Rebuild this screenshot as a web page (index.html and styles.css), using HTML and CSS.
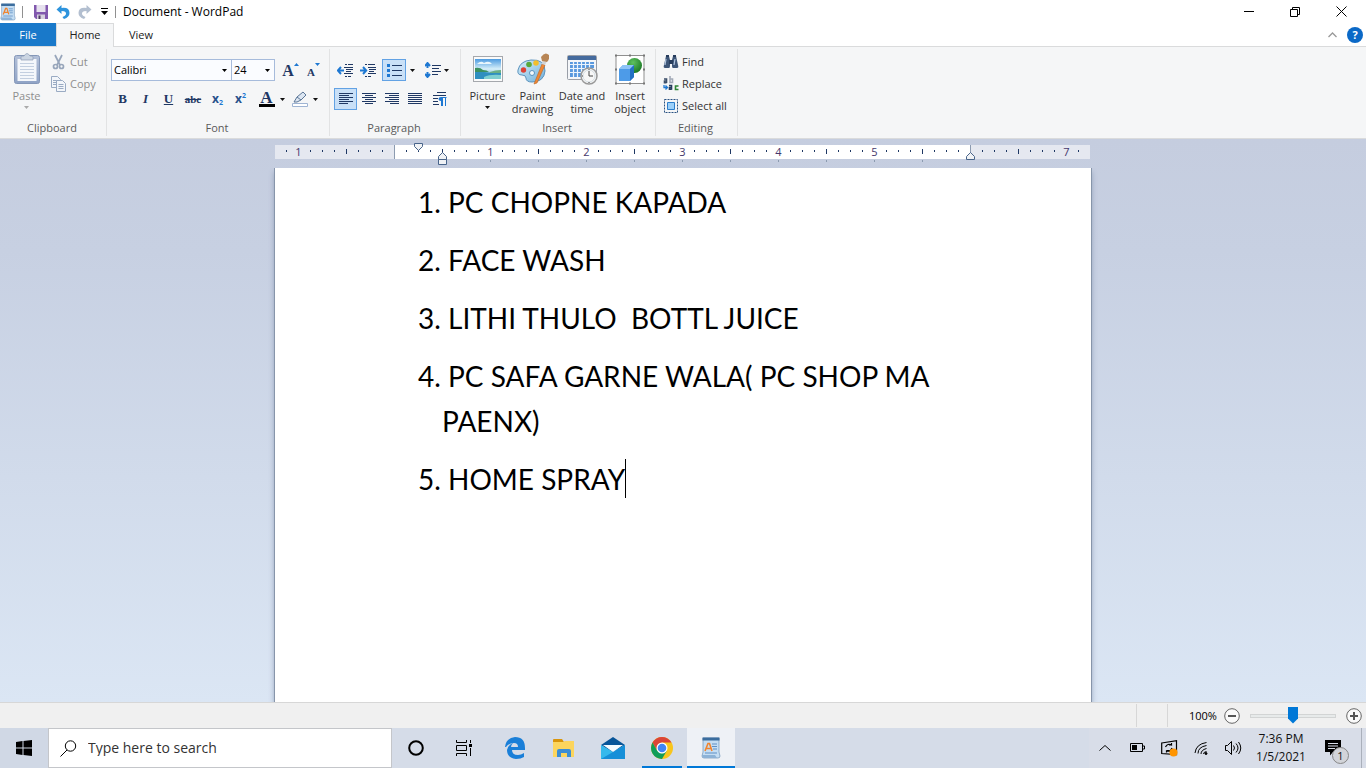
FILE: index.html
```html
<!DOCTYPE html>
<html lang="en">
<head>
<meta charset="utf-8">
<title>Document - WordPad</title>
<link rel="stylesheet" href="styles.css">
</head>
<body>
<svg class="defs" width="0" height="0" aria-hidden="true">
  <defs>
    <linearGradient id="sky" x1="0" y1="0" x2="0" y2="1"><stop offset="0" stop-color="#4d9be0"/><stop offset=".5" stop-color="#d6effa"/><stop offset="1" stop-color="#3d93b8"/></linearGradient>
    <linearGradient id="pal" x1="0" y1="0" x2="1" y2="1"><stop offset="0" stop-color="#d9f0fa"/><stop offset="1" stop-color="#6fb0dc"/></linearGradient>
    <linearGradient id="clip" x1="0" y1="0" x2="0" y2="1"><stop offset="0" stop-color="#b3c0d8"/><stop offset="1" stop-color="#8fa3c6"/></linearGradient>
    <radialGradient id="ball" cx=".4" cy=".3" r=".7"><stop offset="0" stop-color="#5fc25f"/><stop offset="1" stop-color="#1c7a26"/></radialGradient>
    <symbol id="wordpad" viewBox="0 0 20 22">
      <path d="M2 1h16v14l1 4q0 2-2 2H3q-2 0-2-2l1-4z" fill="#c4ddf3" stroke="#6f93b8" stroke-width=".7"/>
      <path d="M1.500 .5h17v3h-17z" fill="#3b6d9e"/>
      <path d="M1 18h13l2 3H3q-2 0-2-3z" fill="#8db2d6"/>
      <path d="M4 14 7 6.500h1.500l2.500 7.500M5.500 11.500h4" fill="none" stroke="#f0842e" stroke-width="1.600"/>
      <path d="M11 7h5M11 9.500h5M12 12h4M4 16h12" stroke="#5f8fc4" stroke-width="1"/>
    </symbol>
    <symbol id="caret" viewBox="0 0 5 3"><path d="M0 0h5L2.500 3z"/></symbol>
  </defs>
</svg>
<div class="app">
  <header class="titlebar">
    <svg class="app-icon" width="16" height="18"><use href="#wordpad"/></svg>
    <span class="bar-sep"></span>
    <div class="quick">
      <button aria-label="Save"><svg width="14" height="14" viewBox="0 0 14 14"><path d="M0 0h14v14H2l-2-2z" fill="#8158ad"/><path d="M2.500 0h9v7h-9z" fill="#e6e1ee"/><path d="M3 9.500h8V14H3z" fill="#d5d0dd"/><path d="M4.500 10.500h2V14h-2z" fill="#4b3b60"/></svg></button>
      <button aria-label="Undo"><svg width="14" height="14" viewBox="0 0 14 14"><path d="M.5 4.500 5.500 0v3q8-1 8 5 0 4-5.500 6-1-1-1.500-2 5-2 3-5-1-1-4-1v3z" fill="#2e94dd"/></svg></button>
      <button aria-label="Redo"><svg width="14" height="14" viewBox="0 0 14 14"><path d="M13.500 4.500 8.500 0v3Q.5 2 .5 8q0 4 5.500 6 1-1 1.500-2-5-2-3-5 1-1 4-1v3z" fill="#b3bfd0"/></svg></button>
      <button class="narrow" aria-label="Customize Quick Access Toolbar"><svg width="7" height="7" viewBox="0 0 7 7"><path d="M0 0h7v1H0zM0 3h7L3.500 7z"/></svg></button>
    </div>
    <span class="bar-sep"></span>
    <h1>Document - WordPad</h1>
    <div class="window-buttons">
      <button aria-label="Minimize"><svg width="10" height="10"><path d="M0 4h10v1H0z"/></svg></button>
      <button aria-label="Restore"><svg class="line" width="10" height="10"><path d="M.5 2.500h7v7h-7zM2.500 2V.5h7v7H8"/></svg></button>
      <button aria-label="Close"><svg class="line" width="11" height="11"><path d="M.5.500l10 10m0-10-10 10"/></svg></button>
    </div>
  </header>

  <nav class="tabs">
    <button class="tab file">File</button>
    <button class="tab active">Home</button>
    <button class="tab">View</button>
    <div class="tab-tools">
      <button aria-label="Minimize the Ribbon"><svg width="9" height="6" viewBox="0 0 9 6"><path d="M.5 5 4.500 1l4 4" fill="none" stroke="#999" stroke-width="1.300"/></svg></button>
      <button class="help" aria-label="Help">?</button>
    </div>
  </nav>

  <section class="ribbon">
    <div class="group clipboard">
      <div class="group-body">
        <button class="big disabled">
          <svg width="26" height="32" viewBox="0 0 26 32"><rect x=".5" y="2.500" width="25" height="28" rx="2" fill="url(#clip)" stroke="#8497b8"/><path d="M3.500 6h19v22h-19z" fill="#f4f7fb"/><path d="M6 10.500h14M6 13.500h14M6 16.500h14M6 19.500h14M6 22.500h14M6 25.500h14" stroke="#c3cfe0"/><path d="M7 7V4q0-1 2-1h1q3-5 6 0h1q2 0 2 1v3z" fill="#cbd5e2" stroke="#8c9cb4" stroke-width=".7"/></svg>
          <span>Paste</span>
          <svg class="caret" width="5" height="3"><use href="#caret"/></svg>
        </button>
        <div class="stack">
          <button class="row-btn disabled"><svg width="15" height="16" viewBox="0 0 15 16" fill="none" stroke="#98a6bb" stroke-width="1.700"><path d="M4 1l5 10M11 1 6 11"/><circle cx="4.500" cy="12.500" r="2"/><circle cx="10.500" cy="12.500" r="2"/></svg>Cut</button>
          <button class="row-btn disabled"><svg width="15" height="16" viewBox="0 0 15 16" fill="#f3f6fa" stroke="#9aabc3"><path d="M.5.500h6l3 3v8h-9z"/><path d="M2 4.500h4M2 6.500h4M2 8.500h4"/><path d="M5.500 4.500h6l3 3v8h-9z"/><path d="M7.500 8.500h5M7.500 10.500h5M7.500 12.500h5"/></svg>Copy</button>
        </div>
      </div>
      <div class="group-label">Clipboard</div>
    </div>

    <div class="group font">
      <div class="group-body rows">
        <div class="tool-row">
          <select class="family" aria-label="Font family"><option>Calibri</option></select><select class="size" aria-label="Font size"><option>24</option></select>
          <button class="tool grow" aria-label="Grow font"><span class="serif">A</span><svg width="5" height="3" viewBox="0 0 5 3"><path d="M0 3h5L2.500 0z" fill="#1e78d2"/></svg></button>
          <button class="tool shrink" aria-label="Shrink font"><span class="serif">A</span><svg width="5" height="3" viewBox="0 0 5 3"><path d="M0 0h5L2.500 3z" fill="#1e78d2"/></svg></button>
        </div>
        <div class="tool-row">
          <button class="tool serif bold" aria-label="Bold">B</button>
          <button class="tool serif italic" aria-label="Italic">I</button>
          <button class="tool serif under" aria-label="Underline">U</button>
          <button class="tool serif strike" aria-label="Strikethrough">abc</button>
          <button class="tool script" aria-label="Subscript">x<sub>2</sub></button>
          <button class="tool script" aria-label="Superscript">x<sup>2</sup></button>
          <button class="tool split colour" aria-label="Text color"><span class="serif letter">A</span><svg class="caret" width="5" height="3"><use href="#caret"/></svg></button>
          <button class="tool split" aria-label="Text highlight color"><svg width="16" height="16" viewBox="0 0 16 16"><path d="M.5 12.500h15v3H.5z" fill="#fff" stroke="#9fb4d3"/><path d="M2 11 5 6l6-5 3 3-5 5-4 2z" fill="#dce6f2" stroke="#5c7798"/><path d="m5 6 4 3" stroke="#5c7798"/></svg><svg class="caret" width="5" height="3"><use href="#caret"/></svg></button>
        </div>
      </div>
      <div class="group-label">Font</div>
    </div>

    <div class="group paragraph">
      <div class="group-body rows">
        <div class="tool-row">
          <button class="tool" aria-label="Decrease indent"><svg class="glyph" width="17" height="15"><path d="M8 1.500h2m1 0h5M8 13.500h2m1 0h3M7 4.500h9M9 6.500h7M9 8.500h5M7 10.500h9"/><path class="blue" d="M1 7.500h6M4 4 .8 7.500 4 11"/></svg></button>
          <button class="tool" aria-label="Increase indent"><svg class="glyph" width="17" height="15"><path d="M5 1.500h2m1 0h7M5 13.500h2m1 0h3M8 4.500h8M9 6.500h7M9 8.500h5M8 10.500h8"/><path class="blue" d="M0 7.500h6M3 4l3.200 3.500L3 11"/></svg></button>
          <button class="tool selected list" aria-label="Start a list"><svg class="glyph" width="15" height="14"><path d="M5 2.500h10M5 7.500h10M5 12.500h10"/><path class="dot" d="M0 1h3v3H0zM0 6h3v3H0zM0 11h3v3H0z"/></svg></button>
          <button class="tool slim" aria-label="List styles"><svg class="caret" width="5" height="3"><use href="#caret"/></svg></button>
          <button class="tool split spacing" aria-label="Line spacing"><svg class="glyph" width="16" height="16"><path d="M7 3.500h9M7 6.500h7M7 9.500h9M7 12.500h6"/><path class="blue" d="M2.500 1v5M2.500 10v5M0 4l2.500-3L5 4M0 12l2.500 3L5 12"/></svg><svg class="caret" width="5" height="3"><use href="#caret"/></svg></button>
        </div>
        <div class="tool-row">
          <button class="tool selected" aria-label="Align left"><svg class="glyph" width="14" height="12"><path d="M0 .5h14M0 2.500h10M0 4.500h14M0 6.500h10M0 8.500h14M0 10.500h9"/></svg></button>
          <button class="tool" aria-label="Center"><svg class="glyph" width="14" height="12"><path d="M0 .5h14M3 2.500h8M0 4.500h14M3 6.500h8M0 8.500h14M3 10.500h8"/></svg></button>
          <button class="tool" aria-label="Align right"><svg class="glyph" width="14" height="12"><path d="M0 .5h14M4 2.500h10M0 4.500h14M4 6.500h10M0 8.500h14M5 10.500h9"/></svg></button>
          <button class="tool" aria-label="Justify"><svg class="glyph" width="14" height="12"><path d="M0 .5h14M0 2.500h14M0 4.500h14M0 6.500h14M0 8.500h14M0 10.500h14"/></svg></button>
          <button class="tool last" aria-label="Paragraph"><svg class="glyph" width="14" height="14"><path d="M4 .5h9M0 3.500h13M0 6.500h5M0 9.500h5M0 12.500h6"/><path class="pilcrow" d="M8 14V9Q5.500 9 5.500 7T8 5h5.500v1H13v8h-1V6h-2v8z"/></svg></button>
        </div>
      </div>
      <div class="group-label">Paragraph</div>
    </div>

    <div class="group insert">
      <div class="group-body">
        <button class="big picture">
          <svg width="32" height="32" viewBox="0 0 32 32"><rect x="1.500" y="3.500" width="29" height="25" fill="#fafafa" stroke="#a5a8ad"/><path d="M3 6h26v20H3z" fill="url(#sky)"/><path d="M5 11q4-4 7-1 5-3 8 1z" fill="#e9f6fc"/><path d="M3 16q5 0 9 3 8 1 17 1v6H3z" fill="#2f8fc0"/><path d="M3 15q5-1 8 2 4 0 6 2H3z" fill="#3d9160"/><path d="M18 19q5-2 11-2v3H18z" fill="#6aaf86"/><path d="M12 24q6-3 17-2v4H12z" fill="#7fcfd0"/></svg>
          <span>Picture</span>
          <svg class="caret" width="5" height="3"><use href="#caret"/></svg>
        </button>
        <button class="big paint">
          <svg width="32" height="32" viewBox="0 0 32 32"><path d="M14 7q14-1 14 11-1 11-13 11-6 0-6-4 0-3-4-3-5 0-4-5Q3 8 14 7z" fill="url(#pal)" stroke="#5a92bd"/><circle cx="15" cy="20" r="2.500" fill="#f4f9fc" stroke="#5a92bd"/><circle cx="6.500" cy="17" r="2.700" fill="#dd4337"/><circle cx="12" cy="11.500" r="2.800" fill="#58a83c"/><circle cx="19" cy="10" r="2.800" fill="#f3be2c"/><path d="m17 31 8-20 3 1-8 18z" fill="#ef8735" stroke="#b96523" stroke-width=".6"/><path d="m24.500 11 1-3 4 1-1.500 3z" fill="#d0d3d6"/><path d="M24 4q4-6 8-2 1 4-2 7l-5-1z" fill="#b78555"/></svg>
          <span>Paint<br>drawing</span>
        </button>
        <button class="big date">
          <svg width="32" height="32" viewBox="0 0 32 32"><rect x="1.500" y="2.500" width="29" height="24" rx="1" fill="#f4f6f9" stroke="#999ea7"/><path d="M2 3h28v4H2z" fill="#456b9e"/><path d="M4 9h24v15H4z" fill="#5898de"/><path d="M4 11.500h24M4 15.500h24M4 19.500h24M7.500 9v15M11.500 9v15M15.500 9v15M19.500 9v15M23.500 9v15" stroke="#eaf3fc" stroke-width="1.200"/><circle cx="23" cy="23" r="8" fill="#f7f7f7" stroke="#999" stroke-width="1.500"/><circle cx="23" cy="23" r="6" fill="none" stroke="#d4dde3"/><path d="M23 18v5h4M23 16v1M23 29v1M17 23h-1" fill="none" stroke="#444"/></svg>
          <span>Date and<br>time</span>
        </button>
        <button class="big object">
          <svg width="32" height="32" viewBox="0 0 32 32"><path d="M2 2.500h28v28H2z" fill="#fff" stroke="#8f8f8f"/><circle cx="20.500" cy="12.500" r="7.500" fill="url(#ball)"/><path d="m5 16 4-4h11v12l-4 4H5z" fill="#4d9be8"/><path d="m5 16 4-4h11l-4 4z" fill="#8dc3f7"/><path d="m16 16 4-4v12l-4 4z" fill="#2471c4"/><path d="M1 1.500h2v2H1zM15 1.500h2v2h-2zM29 1.500h2v2h-2zM1 15.500h2v2H1zM29 15.500h2v2h-2zM1 29.500h2v2H1zM15 29.500h2v2h-2zM29 29.500h2v2h-2z" fill="#777"/></svg>
          <span>Insert<br>object</span>
        </button>
      </div>
      <div class="group-label">Insert</div>
    </div>

    <div class="group editing">
      <div class="group-body">
        <div class="stack">
          <button class="row-btn"><svg width="16" height="16" viewBox="0 0 16 16"><path d="M3 2h3l1 4v6q0 2-1 2H2q-2 0-1-3zM13 2h-3L9 6v6q0 2 1 2h4q2 0 1-3z" fill="#3d5577"/><path d="M6 6h4v4H6zM3 1h3v2H3zM10 1h3v2h-3z" fill="#263c5c"/><path d="M3 5 2 11M12 5l-1 6" stroke="#b1c4de" stroke-width="1.200"/></svg>Find</button>
          <button class="row-btn"><svg width="16" height="16" viewBox="0 0 16 16" fill="none" stroke-width="1.600"><g stroke="#3b4e69"><path d="M1 3h2.500v4M3.500 5H1.500v1.700h2"/></g><path d="M7 0v6.500h2.500V3H7" stroke="#a3abb8"/><path d="M6 9.500h2.500v4.200M8.500 11.500h-2v1.800h2" stroke="#263c5c"/><path d="M15.500 10h-3v3.500h3" stroke="#2e8534"/><path d="M1 9v2.500h3M2.500 9.500l2 2-2 2" stroke="#1e78d2" stroke-width="1.300"/></svg>Replace</button>
          <button class="row-btn"><svg width="16" height="16" viewBox="0 0 16 16"><path d="M1.500 1.500h13v13h-13z" fill="none" stroke="#2a5382" stroke-dasharray="2 1"/><path d="M4.500 4.500h7v7h-7z" fill="#9bd0fa" stroke="#2c7ecb"/></svg>Select all</button>
        </div>
      </div>
      <div class="group-label">Editing</div>
    </div>
  </section>

  <main class="workspace">
    <div class="ruler"><svg id="ruler" width="816" height="23" role="img" aria-label="Ruler"></svg></div>
    <article class="page">
      <p>1. PC CHOPNE KAPADA</p>
      <p>2. FACE WASH</p>
      <p>3. LITHI THULO  BOTTL JUICE</p>
      <p>4. PC SAFA GARNE WALA( PC SHOP MA PAENX)</p>
      <p>5. HOME SPRAY<span class="cursor"></span></p>
    </article>
  </main>

  <footer class="status">
    <span class="cell"></span>
    <div class="zoom">
      <label for="zoom">100%</label>
      <button aria-label="Zoom out"><svg width="16" height="16" viewBox="0 0 16 16"><circle cx="8" cy="8" r="7.300"/><path d="M4 7h8v2H4z"/></svg></button>
      <input id="zoom" type="range" min="0" max="200" value="100">
      <button aria-label="Zoom in"><svg width="16" height="16" viewBox="0 0 16 16"><circle cx="8" cy="8" r="7.300"/><path d="M4 7h3V4h2v3h3v2H9v3H7V9H4z"/></svg></button>
    </div>
  </footer>
</div>

<div class="taskbar">
  <button class="start" aria-label="Start"><svg width="16" height="16" viewBox="0 0 16 16"><path d="m0 2 6.500-1v6.500H0zM7.500.900 16 0v7.500H7.500zM0 8.500h6.500V15L0 14zM7.500 8.500H16V16l-8.500-1z"/></svg></button>
  <div class="search">
    <svg class="line" width="17" height="17" viewBox="0 0 17 17"><circle cx="10.500" cy="6" r="5.200"/><path d="M7 10 .5 16.500"/></svg>
    <input type="text" placeholder="Type here to search" aria-label="Type here to search">
  </div>
  <button class="task" aria-label="Cortana"><svg width="18" height="18"><circle cx="9" cy="9" r="6.800" fill="none" stroke="#000" stroke-width="2"/></svg></button>
  <button class="task" aria-label="Task View"><svg class="line" width="18" height="16" viewBox="0 0 18 16"><path d="M1.500 0v2.500h10V0M1.500 5.500h10v5h-10zM1.500 16v-2.500h10V16M15.500 0v3M15.500 8v8"/><path d="M14 4h3v3h-3z" fill="#000" stroke="none"/></svg></button>
  <div class="pinned">
    <button class="task" aria-label="Microsoft Edge"><svg width="20" height="22" viewBox="0 0 20 22"><path d="M0 10Q1 1 10 0q10 0 10 11v2H7q0 5 6 5 3 0 6-2v4q-3 2-8 2-9-1-9-9 1-5 6-7-2 2-2 4h7q0-4-4-4-5 0-8 4z" fill="#1a7fd8"/></svg></button>
    <button class="task" aria-label="File Explorer"><svg width="22" height="19" viewBox="0 0 22 19"><path d="M0 1q0-1 1-1h8l2 3H0z" fill="#d9950b"/><path d="M0 3h10l2-1h9v16H0z" fill="#fcd55d"/><path d="M4 18v-6q0-2 2-2h10q2 0 2 2v6h-4v-4H8v4z" fill="#3c8ed4"/></svg></button>
    <button class="task" aria-label="Mail"><svg width="24" height="22" viewBox="0 0 24 22"><path d="M0 8 12 0l12 8-12 8z" fill="#075599"/><path d="m0 8 12 7 12-7v14H0z" fill="#36b9ec"/><path d="M0 22 24 8v14z" fill="#168fd8"/><path d="M2 8h20l-10 7z" fill="#f4fbff"/></svg></button>
    <button class="task running" aria-label="Google Chrome"><svg width="22" height="22" viewBox="0 0 22 22"><circle cx="11" cy="11" r="11" fill="#f8c51c"/><path d="M1.500 5.500A11 11 0 0 1 20.500 5.500H11L6.200 13.800z" fill="#db4437"/><path d="M1.500 5.500 6.200 13.800 11 16.500 15.800 13.800 11 22A11 11 0 0 1 1.500 5.500z" fill="#109d58"/><circle cx="11" cy="11" r="5.500" fill="#fff"/><circle cx="11" cy="11" r="4.300" fill="#4285f4"/></svg></button>
    <button class="task current" aria-label="WordPad"><svg width="20" height="22"><use href="#wordpad"/></svg></button>
  </div>
  <div class="tray">
    <button aria-label="Show hidden icons"><svg class="line" width="12" height="8"><path d="m.5 6.500 5.500-5 5.500 5"/></svg></button>
    <button aria-label="Battery"><svg width="15" height="10"><path d="M.5.500h12v8H.5zM13 3h1.500v3H13" fill="none" stroke="#000"/><path d="M2 2h5v5H2z"/></svg></button>
    <button aria-label="Sync"><svg width="17" height="17" viewBox="0 0 17 17"><path d="M.7 3 15.500.700v13.800L.7 13.500z" fill="none" stroke="#000" stroke-width="1.200"/><path d="M4.500 7q2-4 6-2V3M10.500 5H8M11 8q-1 4-5.500 3v1.500M5.500 10.500H8" fill="none" stroke="#000" stroke-width="1.200"/><circle cx="12.500" cy="12.500" r="4" fill="#ff9400"/></svg></button>
    <button aria-label="Network"><svg class="line" width="14" height="14" viewBox="0 0 14 14"><path d="M1 12Q2 3 12.500 1.500M4 12.500Q4 6 12.500 4.500M7 13q0-4 5.500-5.500"/><path d="M9.500 13q0-2 3-2.500"/><circle cx="12" cy="12.500" r="1" fill="#000"/></svg></button>
    <button aria-label="Volume"><svg class="line" width="17" height="14" viewBox="0 0 17 14"><path d="M.5 4.500h2l4-4v13l-4-4h-2zM8.500 4.500q2 2.500 0 5M11 2.500q4 4.500 0 9M13.500 1q4.500 6 0 12"/></svg></button>
    <div class="clock"><time>7:36 PM</time><time>1/5/2021</time></div>
    <button class="notice" aria-label="Notifications"><svg width="16" height="16" viewBox="0 0 16 16"><path d="M0 0h16v12H8l-3 3.500V12H0z"/><path d="M3 3.500h10M3 6h10M3 8.500h7" stroke="#d8dde9"/></svg><span class="badge">1</span></button>
    <span class="desktop"></span>
  </div>
</div>
<script src="ruler.js"></script>
</body>
</html>
```
FILE: styles.css
```css
* { box-sizing: border-box; }
html, body { height: 100%; }
body {
  margin: 0;
  display: flex;
  flex-direction: column;
  overflow: hidden;
  background: #fff;
  color: #222;
  font: 11px/16px "Open Sans", "Noto Sans", sans-serif;
}
button, input, select { font: inherit; color: inherit; }
button {
  display: flex;
  align-items: center;
  justify-content: center;
  border: 0;
  padding: 0;
  background: none;
}
svg { display: block; flex: none; }
.defs { position: absolute; }
.line { fill: none; stroke: #000; }
.app { flex: 1; min-height: 0; display: flex; flex-direction: column; }

.titlebar { display: flex; align-items: center; height: 23px; }
.app-icon { margin-right: 6px; }
.bar-sep { width: 1px; height: 12px; background: #909090; }
.quick { display: flex; padding-left: 7px; }
.quick button { width: 22px; height: 20px; }
.quick .narrow { width: 16px; margin-right: 3px; }
.titlebar h1 { margin: 0 0 0 7px; font-size: 12px; font-weight: 400; color: #000; }
.window-buttons { display: flex; margin-left: auto; padding-right: 2px; }
.window-buttons button { width: 46px; height: 22px; }

.tabs { display: flex; height: 24px; border-bottom: 1px solid #dadbdc; }
.tab { padding: 0 15px; }
.tab.file { width: 56px; height: 23px; background: #1979ca; color: #fff; }
.tab.active {
  width: 58px;
  height: 24px;
  padding-bottom: 1px;
  background: #f5f6f7;
  border: 1px solid #dadbdc;
  border-bottom: 0;
}
.tab-tools { display: flex; align-items: center; gap: 10px; margin-left: auto; padding-right: 3px; }
.help { width: 16px; height: 16px; border-radius: 50%; background: #0b69c7; color: #fff; font-weight: 700; }

.ribbon { display: flex; height: 92px; background: #f5f6f7; border-bottom: 1px solid #dadbdc; color: #333; }
.group { display: flex; flex-direction: column; margin: 2px 0; border-right: 1px solid #e2e3e4; }
.group-body { flex: 1; display: flex; justify-content: center; }
.group-label { height: 16px; padding-right: 2px; text-align: center; color: #5a5a5a; }
.clipboard { width: 107px; }
.clipboard .group-body { justify-content: flex-start; padding-left: 8px; }
.font { width: 223px; }
.paragraph { width: 131px; }
.insert { width: 195px; }
.editing { width: 82px; }
.big { flex-direction: column; justify-content: flex-start; padding-top: 4px; line-height: 13px; }
.big span { margin: 4px 0; }
.insert .big { white-space: nowrap; }
.picture, .paint { width: 45px; }
.date { width: 54px; }
.object { width: 42px; }
.clipboard .big { width: 37px; }
.disabled { color: #8e8e8e; }
.disabled .caret { fill: #aaa; }
.stack { display: flex; flex-direction: column; padding: 2px 0 0 6px; }
.row-btn { height: 22px; justify-content: flex-start; gap: 4px; white-space: nowrap; }
.editing .group-body { justify-content: flex-start; }
.editing .stack { padding-left: 7px; }
.editing .row-btn { gap: 3px; }

.rows { flex-direction: column; justify-content: flex-start; gap: 7px; padding-top: 10px; }
.tool-row { display: flex; align-items: center; height: 22px; }
.font .tool-row { padding-left: 4px; }
.paragraph .tool-row { padding-left: 4px; }
select {
  appearance: none;
  height: 22px;
  margin: 0;
  border: 1px solid #a6bbdb;
  border-radius: 0;
  padding: 0 2px;
  color: #000;
  background: #fafcff url("data:image/svg+xml,%3Csvg xmlns='http://www.w3.org/2000/svg' width='5' height='3'%3E%3Cpath d='M0 0h5L2.5 3z'/%3E%3C/svg%3E") no-repeat right 4px center;
}
.family { width: 121px; }
.size { width: 44px; margin-left: -1px; }
.tool { width: 23px; height: 22px; color: #1f3864; }
.paragraph .tool.last { width: 28px; }
.selected { border: 1px solid #62a2e4; background: #c9e0f7; }
.serif { font-family: "Liberation Serif", serif; font-weight: 700; color: #1f3864; }
.grow { margin-left: 4px; align-items: flex-start; font-size: 16px; line-height: 24px; }
.shrink { align-items: flex-start; font-size: 11px; line-height: 26px; }
.grow svg, .shrink svg { margin-top: 4px; }
.bold, .italic, .under { width: 23px; font-size: 13px; }
.italic { font-style: italic; }
.under { text-decoration: underline; }
.strike { width: 26px; font-size: 11px; text-decoration: line-through; }
.script { font-size: 12px; font-weight: 700; color: #28508c; }
.script sub, .script sup { font-size: 7px; line-height: 10px; color: #1e78d2; }
.script sub { align-self: flex-end; padding-bottom: 2px; }
.script sup { align-self: flex-start; padding-top: 3px; }
.split { width: 33px; gap: 5px; }
.colour { margin-left: 3px; }
.letter { width: 16px; height: 16px; border-bottom: 3px solid #000; font-size: 17px; line-height: 13px; }
.slim { width: 12px; }
.list { width: 24px; margin-left: 2px; }
.spacing { margin-left: 2px; gap: 3px; }
.caret { fill: #111; }
.glyph { fill: none; stroke: #1f3864; }
.glyph .blue { stroke: #1e78d2; stroke-width: 2; }
.glyph .dot, .glyph .pilcrow { fill: #1e78d2; stroke: none; }

.workspace {
  flex: 1;
  min-height: 0;
  display: flex;
  flex-direction: column;
  align-items: center;
  padding-top: 6px;
  background: linear-gradient(#c5cddf, #c7d0e2 20%, #dbe6f4);
}
.ruler { width: 816px; height: 23px; }
#ruler { overflow: visible; font: 11px "Open Sans", sans-serif; }
.page {
  flex: 1;
  min-height: 0;
  width: 816px;
  max-width: 100%;
  padding: 12px 112px 0 167px;
  background: #fff;
  box-shadow: 0 0 0 1px #8795aa, 0 4px 6px #8494ae;
  clip-path: inset(0 -8px);
  color: #000;
  font: 28px/45px Lato, sans-serif;
}
.page p { margin: 0 0 13px; text-indent: -24px; white-space: pre-wrap; }
.cursor { display: inline-block; width: 1px; height: 39px; margin: -6px 0 3px; vertical-align: middle; background: #000; }

.status {
  display: flex;
  justify-content: flex-end;
  height: 26px;
  background: #f0f0f0;
  border-top: 1px solid #d7d7d7;
}
.cell { width: 32px; margin: 1px 0; border: solid #d7d7d7; border-width: 0 1px; }
.zoom { display: flex; align-items: center; padding: 0 4px 0 21px; color: #000; }
.zoom label { width: 35px; }
.zoom circle { fill: #fafafa; stroke: #666; }
.zoom path { fill: #555; }
.zoom input { appearance: none; width: 86px; height: 20px; margin: 0 10px; background: none; }
.zoom input::-webkit-slider-runnable-track { height: 4px; border: 1px solid #d2d4d4; background: #e7eaea; }
.zoom input::-webkit-slider-thumb {
  appearance: none;
  width: 10px;
  height: 17px;
  margin-top: -8px;
  background: #0078d7;
  clip-path: polygon(0 0, 100% 0, 100% 70%, 50% 100%, 0 70%);
}

.taskbar { display: flex; height: 40px; background: #d5dce8; color: #111; }
.start { width: 48px; background: #d0d8e5; }
.search {
  display: flex;
  align-items: center;
  gap: 11px;
  width: 344px;
  padding-left: 11px;
  background: #fff;
  border: 1px solid #c4c6ca;
}
.search input { flex: 1; min-width: 0; border: 0; padding: 0; outline: 0; background: none; font-size: 14px; }
.search input::placeholder { color: #333; opacity: 1; }
.task { width: 48px; height: 40px; }
.pinned { display: flex; gap: 1px; padding-left: 3px; }
.running { background: linear-gradient(#0078d7, #0078d7) center bottom / 40px 2px no-repeat; }
.current { background: linear-gradient(#0078d7, #0078d7) bottom / 100% 2px no-repeat #eef1f6; }
.tray { display: flex; margin-left: auto; background: #d8dde8; }
.tray button { width: 32px; }
.clock { display: flex; flex-direction: column; justify-content: center; width: 64px; text-align: center; line-height: 18px; }
.clock { font-size: 12px; }
.tray .notice { position: relative; width: 40px; }
.badge {
  position: absolute;
  left: 19px;
  top: 19px;
  width: 17px;
  height: 17px;
  border: 1px solid #888;
  border-radius: 50%;
  background: #d2d4d9;
  line-height: 15px;
}
.desktop { width: 5px; margin-left: 8px; border-left: 1px solid #aab0bb; }
```
FILE: ruler.js
```js
const ruler = document.getElementById("ruler");
const origin = 119.5;
const shapes = [
  '<path d="M0 0h815v14H0z" fill="#e5e8f0"/>',
  '<path d="M120 0h576v14H120z" fill="#fff"/>',
  '<path d="M119.500 0v14M695.500 0v10" stroke="#8c9bb0"/>'
];
for (let i = -9; i <= 57; i++) {
  if (i === 0 || i === 48) continue;
  const x = origin + i * 12;
  if (i % 8 === 0) {
    shapes.push(`<text x="${x}" y="11" text-anchor="middle" fill="#44376b">${Math.abs(i / 8)}</text>`);
  } else {
    const tall = i % 4 === 0;
    shapes.push(`<path d="M${x} ${tall ? 4 : 5}v${tall ? 5 : 2}" stroke="#1f3864"/>`);
  }
  if (i > 4 && i < 48 && i % 4 === 0) {
    shapes.push(`<path d="M${x} 15v2" stroke="#8c9bb0"/>`);
  }
}
shapes.push(
  '<g fill="#f0f2f5" stroke="#48648a"><path d="M139.500-1.500h8v3l-4 4-4-4z"/>',
  '<path d="M163.500 14.500v-3l4-4 4 4v3zM163.500 14.500h8v5h-8z"/>',
  '<path d="M691.500 14.500v-3l4-4 4 4v3z"/></g>'
);
ruler.innerHTML = shapes.join("");
```
